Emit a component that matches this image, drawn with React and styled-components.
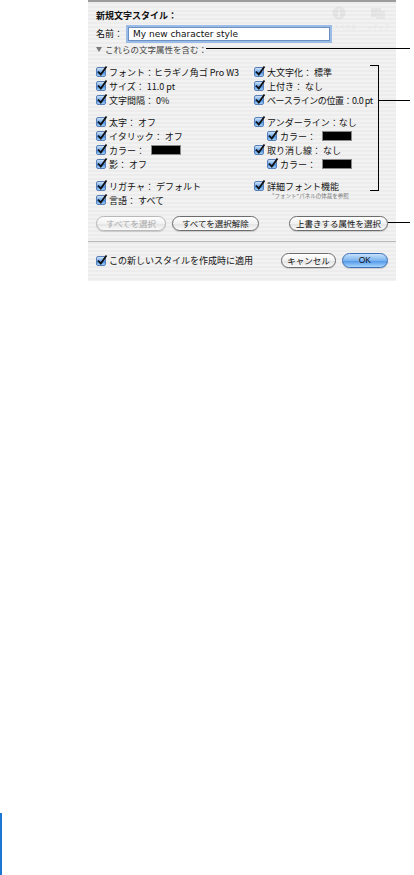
import React from 'react';
import styled, { createGlobalStyle } from 'styled-components';

const GlobalStyle = createGlobalStyle`
  html, body {
    margin: 0;
    padding: 0;
    background: #fff;
  }
  body {
    font-family: "Noto Sans CJK JP", "Liberation Sans", sans-serif;
    color: #111;
  }
`;

const Page = styled.div`
  position: relative;
  width: 414px;
  min-height: 875px;
  display: flex;
  flex-direction: column;
`;

const Sheet = styled.div`
  position: relative;
  margin-left: 88px;
  width: 308px;
  box-sizing: border-box;
  padding: 9px 8px 13px;
  border-top: 2px solid #9c9c9c;
  background: repeating-linear-gradient(
    180deg,
    #ececec 0px,
    #ececec 2px,
    #f2f2f2 2px,
    #f2f2f2 4px
  );
  font-size: 9px;
`;

const Toolbar = styled.div`
  position: absolute;
  top: 4px;
  right: 6px;
  display: flex;
  gap: 10px;
  opacity: 0.06;
`;

const ToolItem = styled.div`
  display: flex;
  flex-direction: column;
  align-items: center;
  gap: 2px;
  font-size: 6px;
  color: #333;
`;

const Title = styled.div`
  height: 14px;
  line-height: 14px;
  font-weight: bold;
  margin-top: -2px;
`;

const NameRow = styled.div`
  display: flex;
  align-items: center;
  margin-top: 3px;
  height: 15px;
`;

const Label = styled.span`
  width: 32px;
  line-height: 14px;
`;

const NameInput = styled.div`
  width: 196px;
  height: 12px;
  line-height: 12px;
  padding-left: 4px;
  background: #fff;
  border: 1px solid #6c8fc4;
  box-shadow: 0 0 0 2px #9cbce8;
  font-family: "Lucida Grande", "DejaVu Sans", sans-serif;
  font-size: 9px;
`;

const Disclosure = styled.div`
  display: flex;
  align-items: center;
  gap: 3px;
  height: 14px;
  margin-top: 1px;
  color: #444;
  font-size: 8.5px;
  &::before {
    content: '';
    border-left: 3px solid transparent;
    border-right: 3px solid transparent;
    border-top: 5px solid #7a7a7a;
  }
`;

const Columns = styled.div`
  display: grid;
  grid-template-columns: 158px 1fr;
  margin-top: 9px;
`;

const Column = styled.div`
  display: flex;
  flex-direction: column;
  gap: 8px;
`;

const Group = styled.div`
  display: flex;
  flex-direction: column;
`;

const Row = styled.div`
  display: flex;
  align-items: center;
  height: 14px;
  padding-left: ${p => (p.$indent ? 13 : 0)}px;
  letter-spacing: ${p => (p.$tight ? '-0.45px' : 'normal')};
  white-space: nowrap;
`;

const Box = styled.span`
  width: 10px;
  height: 10px;
  box-sizing: border-box;
  margin-right: 3px;
  border: 1px solid #5a7fb8;
  border-radius: 2px;
  background: linear-gradient(180deg, #cfe4fa 0%, #6ea6e6 50%, #3f86db 51%, #9fd0fb 100%);
  position: relative;
  flex: none;
`;

const Swatch = styled.span`
  display: inline-block;
  width: 30px;
  height: 10px;
  margin-left: 6px;
  background: #000;
  border: 1px solid #888;
  box-sizing: border-box;
`;

const Note = styled.div`
  padding-left: 18px;
  height: 7px;
  line-height: 7px;
  font-size: 5.5px;
  color: #777;
  white-space: nowrap;
`;

const ButtonRow = styled.div`
  display: flex;
  align-items: center;
  gap: 6px;
  margin-top: 9px;
`;

const Pill = styled.button`
  height: 15px;
  padding: 0 ${p => p.$pad || 10}px;
  border-radius: 8px;
  border: 1px solid ${p => (p.$disabled ? '#b8b8b8' : '#6c6c6c')};
  background: linear-gradient(180deg, #ffffff 0%, #f1f1f1 50%, #e2e2e2 51%, #fafafa 100%);
  color: ${p => (p.$disabled ? '#a8a8a8' : '#111')};
  font-family: inherit;
  font-size: 8.5px;
  line-height: 13px;
  white-space: nowrap;
  box-shadow: 0 1px 1px rgba(0, 0, 0, 0.15);
`;

const Primary = styled(Pill)`
  border-color: #3d6fb6;
  background: linear-gradient(180deg, #c7e1fb 0%, #7cb4ef 50%, #4d93e6 51%, #a6d6fd 100%);
  font-family: "Liberation Sans", sans-serif;
`;

const Spacer = styled.div`
  flex: 1;
`;

const Separator = styled.div`
  height: 1px;
  margin: 10px -8px 0;
  background: #b9b9b9;
`;

const FooterRow = styled.div`
  display: flex;
  align-items: center;
  gap: 6px;
  margin-top: 11px;
`;

const Callout = styled.div`
  position: absolute;
  background: #000;
  left: ${p => p.$x}px;
  top: ${p => p.$y}px;
  width: ${p => p.$w}px;
  height: ${p => p.$h}px;
`;

const MarginBar = styled.div`
  margin-top: auto;
  width: 2px;
  height: 62px;
  background: #1a78d4;
`;

const Check = () => (
  <Box>
    <svg width="12" height="12" viewBox="0 0 12 12" style={{ position: 'absolute', left: -1, top: -3 }}>
      <path d="M2 6.5 L4.8 9.5 L10.5 1.5" fill="none" stroke="#111" strokeWidth="1.8" />
    </svg>
  </Box>
);

const Item = ({ children, indent, tight }) => (
  <Row $indent={indent} $tight={tight}>
    <Check />
    {children}
  </Row>
);

export default function App() {
  return (
    <>
      <GlobalStyle />
      <Page>
        <Sheet>
          <Toolbar>
            <ToolItem>
              <svg width="14" height="14" viewBox="0 0 14 14">
                <circle cx="7" cy="7" r="6.5" fill="#333" />
                <rect x="6" y="6" width="2" height="5" fill="#fff" />
                <circle cx="7" cy="4" r="1.1" fill="#fff" />
              </svg>
              インスペクタ
            </ToolItem>
            <ToolItem>
              <svg width="16" height="14" viewBox="0 0 16 14">
                <rect x="1" y="2" width="10" height="9" fill="#333" />
                <rect x="6" y="5" width="9" height="8" fill="#555" />
              </svg>
              メディア
            </ToolItem>
          </Toolbar>

          <Title>新規文字スタイル：</Title>
          <NameRow>
            <Label>名前：</Label>
            <NameInput>My new character style</NameInput>
          </NameRow>
          <Disclosure>これらの文字属性を含む：</Disclosure>

          <Columns>
            <Column>
              <Group>
                <Item>フォント：ヒラギノ角ゴ Pro W3</Item>
                <Item>サイズ：&nbsp;11.0 pt</Item>
                <Item>文字間隔：&nbsp;0%</Item>
              </Group>
              <Group>
                <Item>太字：&nbsp;オフ</Item>
                <Item>イタリック：&nbsp;オフ</Item>
                <Item>カラー：<Swatch /></Item>
                <Item>影：&nbsp;オフ</Item>
              </Group>
              <Group>
                <Item>リガチャ：&nbsp;デフォルト</Item>
                <Item>言語：&nbsp;すべて</Item>
              </Group>
            </Column>
            <Column>
              <Group>
                <Item>大文字化：&nbsp;標準</Item>
                <Item>上付き：&nbsp;なし</Item>
                <Item tight>ベースラインの位置：0.0 pt</Item>
              </Group>
              <Group>
                <Item>アンダーライン：なし</Item>
                <Item indent>カラー：<Swatch /></Item>
                <Item>取り消し線：&nbsp;なし</Item>
                <Item indent>カラー：<Swatch /></Item>
              </Group>
              <Group>
                <Item>詳細フォント機能</Item>
                <Note>“フォント”パネルの体裁を参照</Note>
              </Group>
            </Column>
          </Columns>

          <ButtonRow>
            <Pill $disabled $pad={9}>すべてを選択</Pill>
            <Pill $pad={9}>すべてを選択解除</Pill>
            <Spacer />
            <Pill $pad={6}>上書きする属性を選択</Pill>
          </ButtonRow>

          <Separator />

          <FooterRow>
            <Item>この新しいスタイルを作成時に適用</Item>
            <Spacer />
            <Pill $pad={5}>キャンセル</Pill>
            <Primary $pad={16}>OK</Primary>
          </FooterRow>
        </Sheet>

        <Callout $x={206} $y={48} $w={204} $h={1} />
        <Callout $x={370} $y={65} $w={9} $h={1} />
        <Callout $x={378} $y={65} $w={1} $h={126} />
        <Callout $x={370} $y={190} $w={9} $h={1} />
        <Callout $x={378} $y={100} $w={32} $h={1} />
        <Callout $x={388} $y={222} $w={22} $h={1} />

        <MarginBar />
      </Page>
    </>
  );
}
